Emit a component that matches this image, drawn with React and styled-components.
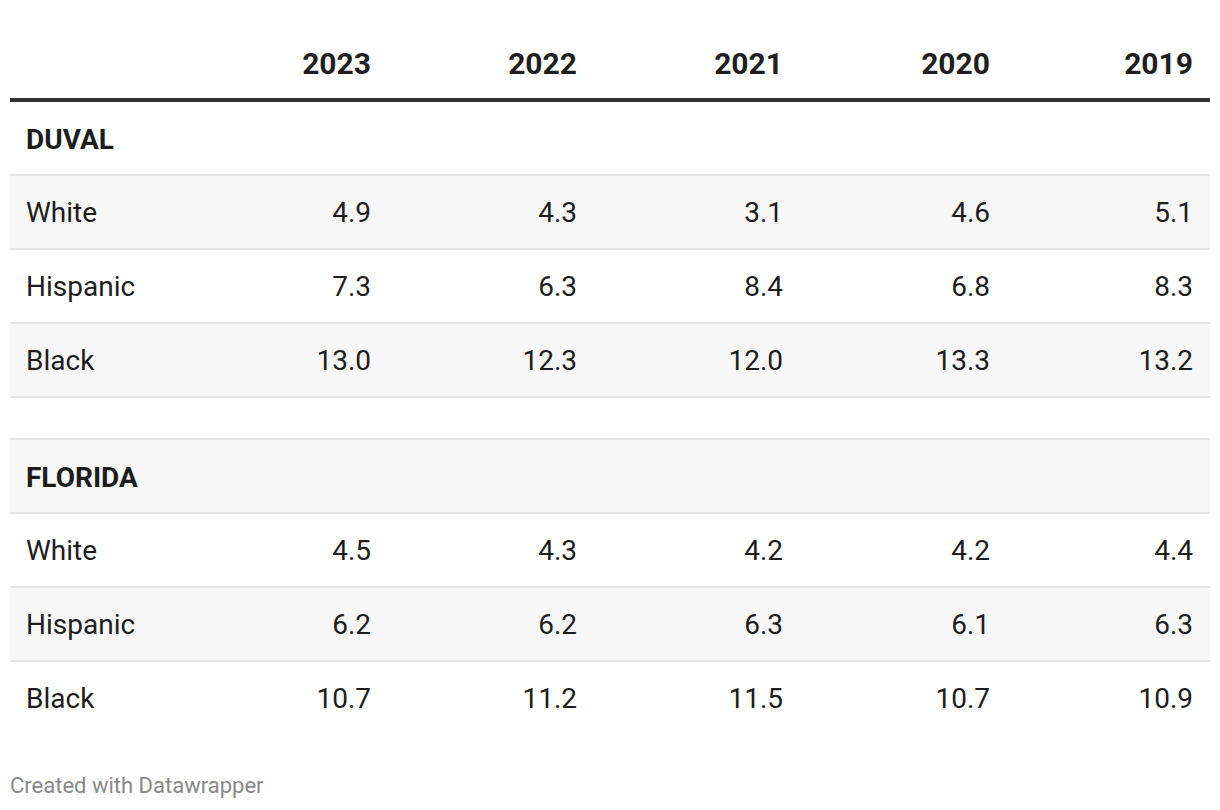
import React from 'react';
import styled, { createGlobalStyle } from 'styled-components';

const GlobalStyle = createGlobalStyle`
  body {
    margin: 0;
    background: #ffffff;
    font-family: Roboto, "Liberation Sans", sans-serif;
    color: #1d1d1d;
  }
`;

const years = ['2023', '2022', '2021', '2020', '2019'];

const groups = [
  {
    name: 'DUVAL',
    rows: [
      ['White', '4.9', '4.3', '3.1', '4.6', '5.1'],
      ['Hispanic', '7.3', '6.3', '8.4', '6.8', '8.3'],
      ['Black', '13.0', '12.3', '12.0', '13.3', '13.2'],
    ],
  },
  {
    name: 'FLORIDA',
    rows: [
      ['White', '4.5', '4.3', '4.2', '4.2', '4.4'],
      ['Hispanic', '6.2', '6.2', '6.3', '6.1', '6.3'],
      ['Black', '10.7', '11.2', '11.5', '10.7', '10.9'],
    ],
  },
];

export default function App() {
  // flatten groups into rows so the zebra striping runs through spacers too
  const lines = [];
  groups.forEach((g, gi) => {
    if (gi > 0) lines.push({ kind: 'spacer' });
    lines.push({ kind: 'group', name: g.name });
    g.rows.forEach((r) => lines.push({ kind: 'data', cells: r }));
  });

  return (
    <>
      <GlobalStyle />
      <Page>
        <HeaderRow>
          <HeadCell />
          {years.map((y) => (
            <HeadCell key={y} $num>{y}</HeadCell>
          ))}
        </HeaderRow>

        {lines.map((line, i) => {
          const striped = i % 2 === 1;
          const last = i === lines.length - 1;
          if (line.kind === 'spacer') {
            return <Spacer key={i} $striped={striped} />;
          }
          if (line.kind === 'group') {
            return (
              <Row key={i} $striped={striped} $last={last}>
                <GroupLabel>{line.name}</GroupLabel>
              </Row>
            );
          }
          return (
            <Row key={i} $striped={striped} $last={last}>
              {line.cells.map((c, ci) => (
                <Cell key={ci} $num={ci > 0}>{c}</Cell>
              ))}
            </Row>
          );
        })}

        <Footer>Created with Datawrapper</Footer>
      </Page>
    </>
  );
}

// --- STYLES ---
const Page = styled.div`
  padding: 28px 10px 0;
  width: 1200px;
`;

const grid = `
  display: grid;
  grid-template-columns: 172px 206px 206px 206px 207px 203px;
  align-items: center;
`;

const HeaderRow = styled.div`
  ${grid}
  height: 70px;
  border-bottom: 4px solid #333333;
`;

const HeadCell = styled.div`
  padding: 0 17px 0 16px;
  font-size: 30px;
  font-weight: 700;
  color: #1f1f1f;
  text-align: ${(p) => (p.$num ? 'right' : 'left')};
`;

const Row = styled.div`
  ${grid}
  height: 72px;
  background: ${(p) => (p.$striped ? '#f7f7f7' : '#ffffff')};
  border-bottom: ${(p) => (p.$last ? 'none' : '2px solid #e6e6e6')};
`;

const Spacer = styled.div`
  height: 40px;
  background: ${(p) => (p.$striped ? '#f7f7f7' : '#ffffff')};
  border-bottom: 2px solid #e6e6e6;
`;

const GroupLabel = styled.div`
  grid-column: 1 / -1;
  padding: 2px 17px 0 16px;
  font-size: 28px;
  font-weight: 700;
  color: #1d1d1d;
`;

const Cell = styled.div`
  padding: 0 17px 0 16px;
  font-size: 28px;
  color: #1d1d1d;
  text-align: ${(p) => (p.$num ? 'right' : 'left')};
`;

const Footer = styled.div`
  margin-top: 39px;
  font-size: 22px;
  line-height: 26px;
  color: #888888;
`;
